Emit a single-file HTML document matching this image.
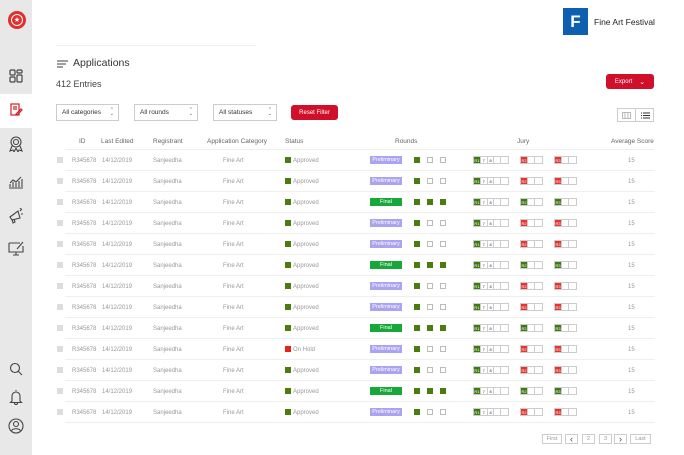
<!DOCTYPE html><html><head><meta charset="utf-8"><style>
*{margin:0;padding:0;box-sizing:border-box}
body{width:684px;height:455px;overflow:hidden;background:#fff;font-family:"Liberation Sans",sans-serif;position:relative;color:#333}
.a{position:absolute}
.fc{display:flex;align-items:center;justify-content:center}
.sb{left:0;top:0;width:32px;height:455px;background:#e8e8e8}
.r{position:absolute;left:55px;width:600px;height:21px;font-size:6px;color:#999}
.r:after{content:"";position:absolute;left:10px;right:0;bottom:0;border-bottom:1px solid #eee}
.r span{position:absolute;top:8px}
.r span.cb{left:2px;top:7px;width:6px;height:6px;background:#ddd}
.r span.st{width:6px;height:6px;background:#4a7c10;top:7px}
.r span.bd{width:32px;height:8px;font-size:5.5px;color:#fff;display:flex;align-items:center;justify-content:center;top:6px}
.pre{background:#a9a3f0}.fin{background:#18a83a}
.r span.sq{width:6px;height:6px;border:1px solid #bbb;top:7px}
.r span.sqg{background:#4a7c10;border-color:#4a7c10}
.r span.j{height:8px;border:1px solid #ccc;display:flex;font-size:4px;top:6px}
.j i{display:flex;align-items:center;justify-content:center;width:8px;border-right:1px solid #ccc;font-style:normal;color:#333}
.j i.g{background:#3f7a10;color:#fff}.j i.rd{background:#e8332e;color:#fff}
.j i:last-child{border-right:0}
.h{position:absolute;top:138px;font-size:6.5px;color:#666}
.sel{position:absolute;top:104px;height:17px;border:1px solid #ccc;font-size:6.5px;display:flex;align-items:center;padding-left:5px;color:#333}
.sel b{position:absolute;right:4px;top:3px;font-size:5px;line-height:4px;color:#555;font-weight:normal;text-align:center}
.pg{position:absolute;top:434px;height:10px;border:1px solid #ccc;font-size:5.5px;color:#999;display:flex;align-items:center;justify-content:center}
</style></head><body>
<div class="a sb"></div>
<div class="a" style="left:8px;top:11px;width:18px;height:18px;border-radius:50%;background:#e0302d;"><div class="a fc" style="left:3px;top:3px;width:12px;height:12px;border-radius:50%;border:1px solid #fff;color:#fff;font-size:7px">★</div></div>
<svg class="a" style="left:9px;top:69px" width="14" height="14" fill="none" stroke="#444" stroke-width="1.2"><rect x="1" y="1" width="5" height="5" rx="1"/><rect x="8" y="1" width="5" height="3" rx="1"/><rect x="1" y="8" width="5" height="5" rx="1"/><rect x="8" y="6" width="5" height="7" rx="1"/></svg>
<div class="a" style="left:0;top:94px;width:32px;height:34px;background:#fff"></div>
<svg class="a" style="left:9px;top:103px" width="14" height="14" fill="none" stroke="#d0202a" stroke-width="1.2"><rect x="2" y="1" width="8" height="11"/><path d="M4 4h4M4 6h4M7 11l5-5 1 1-5 5z"/></svg>
<svg class="a" style="left:9px;top:136px" width="14" height="16" fill="none" stroke="#444" stroke-width="1.1"><circle cx="7" cy="6" r="5"/><circle cx="7" cy="6" r="2.5"/><path d="M3 10l-2 5 3-1 1 2 2-4M11 10l2 5-3-1-1 2-2-4"/></svg>
<svg class="a" style="left:8px;top:175px" width="16" height="14" fill="none" stroke="#444" stroke-width="1.1"><path d="M1 13h14M2 12v-3M5 12v-5M8 12v-4M11 12v-6M14 12v-8M2 8l3-3 3 2 5-5"/></svg>
<svg class="a" style="left:8px;top:208px" width="16" height="16" fill="none" stroke="#444" stroke-width="1.1"><path d="M2 9l8-6 2 7-8 2zM4 11l1 4 2-1-1-3M12 3l2-2M13 6h2M12 1l1-1"/></svg>
<svg class="a" style="left:8px;top:240px" width="16" height="16" fill="none" stroke="#444" stroke-width="1.1"><path d="M1 3h11M1 3v9h14V6M5 15h6M8 12v3M9 9l6-7"/></svg>
<svg class="a" style="left:9px;top:362px" width="14" height="14" fill="none" stroke="#444" stroke-width="1.1"><circle cx="6" cy="6" r="4.5"/><path d="M9 9l4 4"/></svg>
<svg class="a" style="left:9px;top:389px" width="14" height="16" fill="none" stroke="#444" stroke-width="1.1"><path d="M7 1v1M3 12V7a4 4 0 018 0v5l1.5 1.5h-11zM5.5 14a1.5 1.5 0 003 0"/></svg>
<svg class="a" style="left:8px;top:418px" width="16" height="16" fill="none" stroke="#444" stroke-width="1.1"><circle cx="8" cy="8" r="7"/><circle cx="8" cy="6" r="2.5"/><path d="M3.5 13c1-3 8-3 9 0"/></svg>
<div class="a" style="left:56px;top:45px;width:200px;border-top:1px solid #f0f0f0"></div>
<div class="a fc" style="left:563px;top:8px;width:25px;height:27px;background:#0f5fb0;color:#fff;font-size:17px;font-weight:bold">F</div>
<div class="a" style="left:594px;top:17px;font-size:8.5px;color:#222">Fine Art Festival</div>
<svg class="a" style="left:57px;top:60px" width="11" height="8" stroke="#666" stroke-width="1.2"><path d="M0 1h11M0 4h9M0 7h6"/></svg>
<div class="a" style="left:73px;top:57px;font-size:10.5px;color:#333">Applications</div>
<div class="a" style="left:56px;top:79px;font-size:9px;color:#444">412 Entries</div>
<div class="a fc" style="left:606px;top:74px;width:48px;height:15px;background:#d0102a;border-radius:3px;color:#fff;font-size:6px">Export <span style="margin-left:7px;font-size:7px">⌄</span></div>
<div class="sel" style="left:56px;width:63px">All categories<b>⌃<br>⌄</b></div>
<div class="sel" style="left:134px;width:64px">All rounds<b>⌃<br>⌄</b></div>
<div class="sel" style="left:213px;width:64px">All statuses<b>⌃<br>⌄</b></div>
<div class="a fc" style="left:291px;top:105px;width:47px;height:15px;background:#d0102a;border-radius:3px;color:#fff;font-size:6px">Reset Filter</div>
<div class="a" style="left:617px;top:108px;width:37px;height:14px;border:1px solid #ccc"><div class="a" style="left:17px;top:0;width:1px;height:12px;background:#ccc"></div>
<svg class="a" style="left:4px;top:3px" width="9" height="7" fill="none" stroke="#aaa" stroke-width=".8"><rect x=".5" y=".5" width="8" height="6"/><path d="M3 .5v6M6 .5v6"/></svg>
<svg class="a" style="left:23px;top:3px" width="9" height="7" stroke="#333" stroke-width="1"><path d="M0 1h1M2 1h7M0 3.5h1M2 3.5h7M0 6h1M2 6h7"/></svg></div>
<div class="h" style="left:79px">ID</div><div class="h" style="left:101px">Last Edited</div><div class="h" style="left:153px">Registrant</div><div class="h" style="left:207px">Application Category</div><div class="h" style="left:285px">Status</div><div class="h" style="left:395px">Rounds</div><div class="h" style="left:517px">Jury</div><div class="h" style="left:611px">Average Score</div>
<div class="a" style="left:65px;top:149px;width:589px;border-top:1px solid #eee"></div>

<div class="r" style="top:150px"><span class="cb"></span><span style="left:17px">R345678</span><span style="left:47px">14/12/2019</span><span style="left:98px">Sanjeedha</span><span style="left:168px">Fine Art</span><span class="st" style="left:230px"></span><span style="left:238px">Approved</span><span class="bd pre" style="left:315px">Preliminary</span><span class="sq sqg" style="left:359px"></span><span class="sq" style="left:372px"></span><span class="sq" style="left:385px"></span><span class="j" style="left:418px;width:36px"><i class="g">R1</i><i>7</i><i>8</i><i></i><i></i></span><span class="j" style="left:465px;width:23px"><i class="rd">R2</i><i></i><i></i></span><span class="j" style="left:499px;width:23px"><i class="rd">R3</i><i></i><i></i></span><span style="left:573px">15</span></div>
<div class="r" style="top:171px"><span class="cb"></span><span style="left:17px">R345678</span><span style="left:47px">14/12/2019</span><span style="left:98px">Sanjeedha</span><span style="left:168px">Fine Art</span><span class="st" style="left:230px"></span><span style="left:238px">Approved</span><span class="bd pre" style="left:315px">Preliminary</span><span class="sq sqg" style="left:359px"></span><span class="sq" style="left:372px"></span><span class="sq" style="left:385px"></span><span class="j" style="left:418px;width:36px"><i class="g">R1</i><i>7</i><i>8</i><i></i><i></i></span><span class="j" style="left:465px;width:23px"><i class="rd">R2</i><i></i><i></i></span><span class="j" style="left:499px;width:23px"><i class="rd">R3</i><i></i><i></i></span><span style="left:573px">15</span></div>
<div class="r" style="top:192px"><span class="cb"></span><span style="left:17px">R345678</span><span style="left:47px">14/12/2019</span><span style="left:98px">Sanjeedha</span><span style="left:168px">Fine Art</span><span class="st" style="left:230px"></span><span style="left:238px">Approved</span><span class="bd fin" style="left:315px">Final</span><span class="sq sqg" style="left:359px"></span><span class="sq sqg" style="left:372px"></span><span class="sq sqg" style="left:385px"></span><span class="j" style="left:418px;width:36px"><i class="g">R1</i><i>7</i><i>8</i><i></i><i></i></span><span class="j" style="left:465px;width:23px"><i class="g">R2</i><i></i><i></i></span><span class="j" style="left:499px;width:23px"><i class="g">R3</i><i></i><i></i></span><span style="left:573px">15</span></div>
<div class="r" style="top:213px"><span class="cb"></span><span style="left:17px">R345678</span><span style="left:47px">14/12/2019</span><span style="left:98px">Sanjeedha</span><span style="left:168px">Fine Art</span><span class="st" style="left:230px"></span><span style="left:238px">Approved</span><span class="bd pre" style="left:315px">Preliminary</span><span class="sq sqg" style="left:359px"></span><span class="sq" style="left:372px"></span><span class="sq" style="left:385px"></span><span class="j" style="left:418px;width:36px"><i class="g">R1</i><i>7</i><i>8</i><i></i><i></i></span><span class="j" style="left:465px;width:23px"><i class="rd">R2</i><i></i><i></i></span><span class="j" style="left:499px;width:23px"><i class="rd">R3</i><i></i><i></i></span><span style="left:573px">15</span></div>
<div class="r" style="top:234px"><span class="cb"></span><span style="left:17px">R345678</span><span style="left:47px">14/12/2019</span><span style="left:98px">Sanjeedha</span><span style="left:168px">Fine Art</span><span class="st" style="left:230px"></span><span style="left:238px">Approved</span><span class="bd pre" style="left:315px">Preliminary</span><span class="sq sqg" style="left:359px"></span><span class="sq" style="left:372px"></span><span class="sq" style="left:385px"></span><span class="j" style="left:418px;width:36px"><i class="g">R1</i><i>7</i><i>8</i><i></i><i></i></span><span class="j" style="left:465px;width:23px"><i class="rd">R2</i><i></i><i></i></span><span class="j" style="left:499px;width:23px"><i class="rd">R3</i><i></i><i></i></span><span style="left:573px">15</span></div>
<div class="r" style="top:255px"><span class="cb"></span><span style="left:17px">R345678</span><span style="left:47px">14/12/2019</span><span style="left:98px">Sanjeedha</span><span style="left:168px">Fine Art</span><span class="st" style="left:230px"></span><span style="left:238px">Approved</span><span class="bd fin" style="left:315px">Final</span><span class="sq sqg" style="left:359px"></span><span class="sq sqg" style="left:372px"></span><span class="sq sqg" style="left:385px"></span><span class="j" style="left:418px;width:36px"><i class="g">R1</i><i>7</i><i>8</i><i></i><i></i></span><span class="j" style="left:465px;width:23px"><i class="g">R2</i><i></i><i></i></span><span class="j" style="left:499px;width:23px"><i class="g">R3</i><i></i><i></i></span><span style="left:573px">15</span></div>
<div class="r" style="top:276px"><span class="cb"></span><span style="left:17px">R345678</span><span style="left:47px">14/12/2019</span><span style="left:98px">Sanjeedha</span><span style="left:168px">Fine Art</span><span class="st" style="left:230px"></span><span style="left:238px">Approved</span><span class="bd pre" style="left:315px">Preliminary</span><span class="sq sqg" style="left:359px"></span><span class="sq" style="left:372px"></span><span class="sq" style="left:385px"></span><span class="j" style="left:418px;width:36px"><i class="g">R1</i><i>7</i><i>8</i><i></i><i></i></span><span class="j" style="left:465px;width:23px"><i class="rd">R2</i><i></i><i></i></span><span class="j" style="left:499px;width:23px"><i class="rd">R3</i><i></i><i></i></span><span style="left:573px">15</span></div>
<div class="r" style="top:297px"><span class="cb"></span><span style="left:17px">R345678</span><span style="left:47px">14/12/2019</span><span style="left:98px">Sanjeedha</span><span style="left:168px">Fine Art</span><span class="st" style="left:230px"></span><span style="left:238px">Approved</span><span class="bd pre" style="left:315px">Preliminary</span><span class="sq sqg" style="left:359px"></span><span class="sq" style="left:372px"></span><span class="sq" style="left:385px"></span><span class="j" style="left:418px;width:36px"><i class="g">R1</i><i>7</i><i>8</i><i></i><i></i></span><span class="j" style="left:465px;width:23px"><i class="rd">R2</i><i></i><i></i></span><span class="j" style="left:499px;width:23px"><i class="rd">R3</i><i></i><i></i></span><span style="left:573px">15</span></div>
<div class="r" style="top:318px"><span class="cb"></span><span style="left:17px">R345678</span><span style="left:47px">14/12/2019</span><span style="left:98px">Sanjeedha</span><span style="left:168px">Fine Art</span><span class="st" style="left:230px"></span><span style="left:238px">Approved</span><span class="bd fin" style="left:315px">Final</span><span class="sq sqg" style="left:359px"></span><span class="sq sqg" style="left:372px"></span><span class="sq sqg" style="left:385px"></span><span class="j" style="left:418px;width:36px"><i class="g">R1</i><i>7</i><i>8</i><i></i><i></i></span><span class="j" style="left:465px;width:23px"><i class="g">R2</i><i></i><i></i></span><span class="j" style="left:499px;width:23px"><i class="g">R3</i><i></i><i></i></span><span style="left:573px">15</span></div>
<div class="r" style="top:339px"><span class="cb"></span><span style="left:17px">R345678</span><span style="left:47px">14/12/2019</span><span style="left:98px">Sanjeedha</span><span style="left:168px">Fine Art</span><span class="st" style="left:230px;background:#e8201e"></span><span style="left:238px">On Hold</span><span class="bd pre" style="left:315px">Preliminary</span><span class="sq sqg" style="left:359px"></span><span class="sq" style="left:372px"></span><span class="sq" style="left:385px"></span><span class="j" style="left:418px;width:36px"><i class="g">R1</i><i>7</i><i>8</i><i></i><i></i></span><span class="j" style="left:465px;width:23px"><i class="rd">R2</i><i></i><i></i></span><span class="j" style="left:499px;width:23px"><i class="rd">R3</i><i></i><i></i></span><span style="left:573px">15</span></div>
<div class="r" style="top:360px"><span class="cb"></span><span style="left:17px">R345678</span><span style="left:47px">14/12/2019</span><span style="left:98px">Sanjeedha</span><span style="left:168px">Fine Art</span><span class="st" style="left:230px"></span><span style="left:238px">Approved</span><span class="bd pre" style="left:315px">Preliminary</span><span class="sq sqg" style="left:359px"></span><span class="sq" style="left:372px"></span><span class="sq" style="left:385px"></span><span class="j" style="left:418px;width:36px"><i class="g">R1</i><i>7</i><i>8</i><i></i><i></i></span><span class="j" style="left:465px;width:23px"><i class="rd">R2</i><i></i><i></i></span><span class="j" style="left:499px;width:23px"><i class="rd">R3</i><i></i><i></i></span><span style="left:573px">15</span></div>
<div class="r" style="top:381px"><span class="cb"></span><span style="left:17px">R345678</span><span style="left:47px">14/12/2019</span><span style="left:98px">Sanjeedha</span><span style="left:168px">Fine Art</span><span class="st" style="left:230px"></span><span style="left:238px">Approved</span><span class="bd fin" style="left:315px">Final</span><span class="sq sqg" style="left:359px"></span><span class="sq sqg" style="left:372px"></span><span class="sq sqg" style="left:385px"></span><span class="j" style="left:418px;width:36px"><i class="g">R1</i><i>7</i><i>8</i><i></i><i></i></span><span class="j" style="left:465px;width:23px"><i class="g">R2</i><i></i><i></i></span><span class="j" style="left:499px;width:23px"><i class="g">R3</i><i></i><i></i></span><span style="left:573px">15</span></div>
<div class="r" style="top:402px"><span class="cb"></span><span style="left:17px">R345678</span><span style="left:47px">14/12/2019</span><span style="left:98px">Sanjeedha</span><span style="left:168px">Fine Art</span><span class="st" style="left:230px"></span><span style="left:238px">Approved</span><span class="bd pre" style="left:315px">Preliminary</span><span class="sq sqg" style="left:359px"></span><span class="sq" style="left:372px"></span><span class="sq" style="left:385px"></span><span class="j" style="left:418px;width:36px"><i class="g">R1</i><i>7</i><i>8</i><i></i><i></i></span><span class="j" style="left:465px;width:23px"><i class="rd">R2</i><i></i><i></i></span><span class="j" style="left:499px;width:23px"><i class="rd">R3</i><i></i><i></i></span><span style="left:573px">15</span></div>

<div class="pg" style="left:542px;width:20px">First</div>
<div class="pg" style="left:565px;width:13px;color:#444;font-size:9px">‹</div>
<div class="pg" style="left:582px;width:13px">2</div>
<div class="pg" style="left:599px;width:13px">3</div>
<div class="pg" style="left:614px;width:13px;color:#444;font-size:9px">›</div>
<div class="pg" style="left:630px;width:21px">Last</div>
</body></html>
